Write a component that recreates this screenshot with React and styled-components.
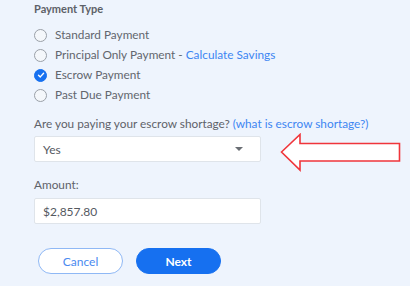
import React from "react";
import styled, { createGlobalStyle } from "styled-components";

const GlobalStyle = createGlobalStyle`
    body {
        margin: 0;
        background: #eef4fd;
        font-family: Lato, "Open Sans", sans-serif;
        color: #5b5f66;
    }
`;

const options = [
    { label: "Standard Payment" },
    { label: "Principal Only Payment", link: "Calculate Savings" },
    { label: "Escrow Payment", checked: true },
    { label: "Past Due Payment" },
];

const App = () => {
    return (
        <>
            <GlobalStyle />
            <Page>
                <Title>Payment Type</Title>
                <RadioList>
                    {options.map((o) => (
                        <RadioRow key={o.label}>
                            <Radio checked={o.checked}>
                                {o.checked && (
                                    <svg width="8" height="8" viewBox="0 0 8 8">
                                        <path d="M1.5 4.2 L3.3 5.9 L6.6 2.3" fill="none" stroke="#fff" strokeWidth="1.4" strokeLinecap="round" strokeLinejoin="round" />
                                    </svg>
                                )}
                            </Radio>
                            <span>
                                {o.label}
                                {o.link && (
                                    <>
                                        {" - "}
                                        <Link>{o.link}</Link>
                                    </>
                                )}
                            </span>
                        </RadioRow>
                    ))}
                </RadioList>
                <Label>
                    Are you paying your escrow shortage? <Link>(what is escrow shortage?)</Link>
                </Label>
                <FieldRow>
                    <Field>
                        Yes
                        <Caret />
                    </Field>
                    <Arrow width="122" height="40" viewBox="0 0 122 40">
                        <path d="M1.5 19 L20 1.5 L20 10.5 L119.5 10.5 L119.5 28 L20 28 L20 37 Z" fill="#fff" stroke="#f0353b" strokeWidth="1.6" strokeLinejoin="miter" />
                    </Arrow>
                </FieldRow>
                <AmountLabel>Amount:</AmountLabel>
                <AmountField>$2,857.80</AmountField>
                <Buttons>
                    <Button>Cancel</Button>
                    <Button primary>Next</Button>
                </Buttons>
            </Page>
        </>
    );
};

const Page = styled.div`
    width: 410px;
    height: 286px;
    box-sizing: border-box;
    padding: 2px 0 0 34px;
    display: flex;
    flex-direction: column;
    font-size: 11.8px;
`;

const Title = styled.div`
    font-size: 11px;
    font-weight: 700;
    color: #5d6168;
    line-height: 14px;
`;

const RadioList = styled.div`
    display: flex;
    flex-direction: column;
    gap: 6px;
    margin-top: 12px;
`;

const RadioRow = styled.div`
    display: flex;
    align-items: center;
    gap: 8px;
    height: 14px;
    line-height: 14px;
    color: #62666d;
`;

const Radio = styled.span`
    width: 13px;
    height: 13px;
    box-sizing: border-box;
    border-radius: 50%;
    border: 1.5px solid ${(p) => (p.checked ? "#1670f0" : "#9aa0a8")};
    background: ${(p) => (p.checked ? "#1670f0" : "#f4f7fb")};
    display: flex;
    align-items: center;
    justify-content: center;
`;

const Link = styled.span`
    color: #3d86f2;
`;

const Label = styled.div`
    margin-top: 15px;
    line-height: 14px;
    color: #5e6269;
`;

const FieldRow = styled.div`
    display: flex;
    align-items: flex-start;
    height: 26px;
    margin-top: 5px;
`;

const Field = styled.div`
    width: 227px;
    height: 26px;
    box-sizing: border-box;
    background: #fff;
    border: 1px solid #dfe4ea;
    border-radius: 2px;
    display: flex;
    align-items: center;
    justify-content: space-between;
    padding: 0 17px 0 8px;
    font-size: 12px;
    color: #55595f;
    flex-shrink: 0;
`;

const AmountField = styled(Field)`
    margin-top: 6px;
`;

const Caret = styled.span`
    width: 0;
    height: 0;
    border-left: 4px solid transparent;
    border-right: 4px solid transparent;
    border-top: 4px solid #6a6e74;
`;

const Arrow = styled.svg`
    margin: -3px 0 0 19px;
    display: block;
    flex-shrink: 0;
`;

const AmountLabel = styled.div`
    margin-top: 16px;
    line-height: 14px;
    color: #5e6269;
`;

const Buttons = styled.div`
    display: flex;
    gap: 13px;
    margin: 24px 0 0 4px;
`;

const Button = styled.button`
    width: 85px;
    height: 26px;
    border-radius: 13px;
    font-family: Lato, sans-serif;
    font-size: 12px;
    cursor: pointer;
    border: 1.5px solid ${(p) => (p.primary ? "#1670f0" : "#8fb8f5")};
    background: ${(p) => (p.primary ? "#1670f0" : "#fff")};
    color: ${(p) => (p.primary ? "#fff" : "#4a8af0")};
    font-weight: ${(p) => (p.primary ? 700 : 400)};
`;

export default App;
